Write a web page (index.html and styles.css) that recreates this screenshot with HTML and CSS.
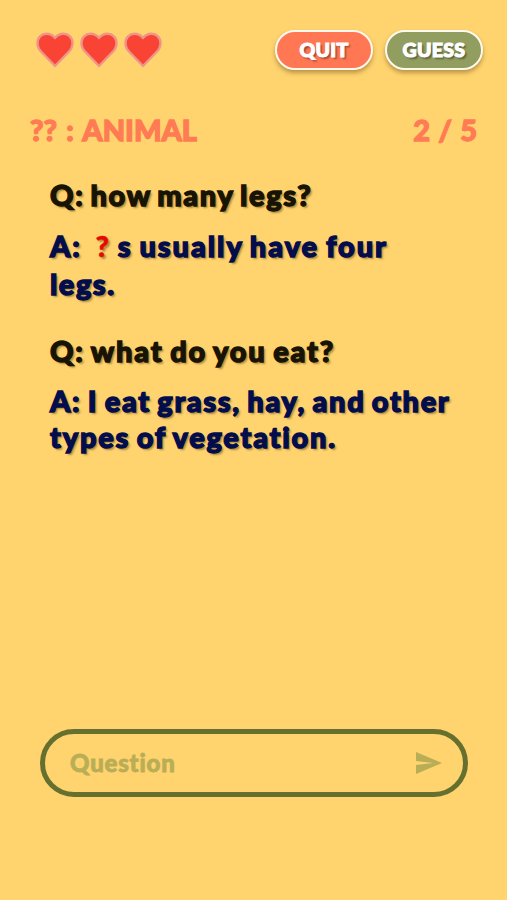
FILE: index.html
```html
<!DOCTYPE html>
<html lang="en">
<head>
<meta charset="utf-8">
<title>Animal guessing game</title>
<link rel="stylesheet" href="styles.css">
</head>
<body>
<main class="game">
  <header class="topbar">
    <div class="lives">
      <svg class="heart" viewBox="0 0 40 38"><path d="M20 35 L6 20.5 C2.5 17 2.5 14 2.5 12 C2.5 6.5 6.5 2.8 11.5 2.8 C15.5 2.8 18 4.5 20 7 C22 4.5 24.5 2.8 28.5 2.8 C33.5 2.8 37.5 6.5 37.5 12 C37.5 14 37.5 17 34 20.5Z"/></svg>
      <svg class="heart" viewBox="0 0 40 38"><path d="M20 35 L6 20.5 C2.5 17 2.5 14 2.5 12 C2.5 6.5 6.5 2.8 11.5 2.8 C15.5 2.8 18 4.5 20 7 C22 4.5 24.5 2.8 28.5 2.8 C33.5 2.8 37.5 6.5 37.5 12 C37.5 14 37.5 17 34 20.5Z"/></svg>
      <svg class="heart" viewBox="0 0 40 38"><path d="M20 35 L6 20.5 C2.5 17 2.5 14 2.5 12 C2.5 6.5 6.5 2.8 11.5 2.8 C15.5 2.8 18 4.5 20 7 C22 4.5 24.5 2.8 28.5 2.8 C33.5 2.8 37.5 6.5 37.5 12 C37.5 14 37.5 17 34 20.5Z"/></svg>
    </div>
    <div class="actions">
      <button class="btn btn-quit">QUIT</button>
      <button class="btn btn-guess">GUESS</button>
    </div>
  </header>
  <div class="status"><span class="category">?? : ANIMAL</span><span class="round">2 / 5</span></div>
  <section class="chat">
    <div class="entry">
      <p class="question"><span class="q-one">Q: how many legs?</span></p>
      <p class="answer tall"><span class="a-one">A: &nbsp;<span class="mark">?</span> s usually have four</span><br><span class="a-two">legs.</span></p>
    </div>
    <div class="entry">
      <p class="question"><span class="q-two">Q: what do you eat?</span></p>
      <p class="answer"><span class="a-three">A: I eat grass, hay, and other</span><br><span class="a-four">types of vegetation.</span></p>
    </div>
  </section>
  <form class="ask">
    <span class="placeholder">Question</span>
    <svg class="send" viewBox="0 0 26 22"><path d="M0 0 26 11 0 22V13L17 11 0 9Z"/></svg>
  </form>
</main>
</body>
</html>
```
FILE: styles.css
```css
* { box-sizing: border-box; }
body { margin: 0; background: #ffd36e; font-family: Lato, sans-serif; font-weight: 900; }
.game { width: 507px; height: 900px; overflow: hidden; display: flex; flex-direction: column; }
.topbar { display: flex; justify-content: space-between; padding: 30px 24px 0 35px; height: 109px; }
.lives { display: flex; gap: 4px; padding-top: 1px; }
.heart { width: 40px; height: 38px; }
.heart path { fill: #f94435; stroke: #f09488; stroke-width: 2.4; stroke-linejoin: round; }
.actions { display: flex; gap: 12px; }
.btn { width: 98px; height: 40px; padding: 0; border: 2px solid #fffaf0; border-radius: 20px; color: #fff; font: 900 19.5px/36px Lato, sans-serif; letter-spacing: .3px; -webkit-text-stroke: 1.1px #fff; text-shadow: 2px 2px 2px rgba(0,0,0,.4); box-shadow: 0 3px 4px rgba(80,50,0,.38); }
.btn-quit { background: #ff7753; }
.btn-guess { background: #929d60; }
.status { display: flex; justify-content: space-between; height: 42px; padding: 0 30px; font-size: 29px; line-height: 42px; color: #ff7b54; -webkit-text-stroke: 1.3px #ff7b54; }
.category { word-spacing: 2.5px; }
.round { word-spacing: 1.3px; }
.chat { height: 578px; padding: 25px 40px 0 50px; font-size: 29px; white-space: nowrap; text-shadow: 2px 2px 2px rgba(70,45,0,.45); }
.entry { height: 156px; }
.question, .answer { margin: 0; -webkit-text-stroke: 1.4px currentColor; }
.question { color: #171405; line-height: 38px; height: 51px; }
.answer { color: #020d4c; line-height: 36px; }
.tall { line-height: 38px; }
.q-one { letter-spacing: 1.65px; word-spacing: -2.5px; }
.q-two { letter-spacing: 1.8px; word-spacing: -2px; }
.a-one { letter-spacing: 1.95px; word-spacing: -2px; }
.a-two { letter-spacing: 1.5px; }
.a-three { letter-spacing: 1.65px; word-spacing: -2px; }
.a-four { letter-spacing: 1.75px; word-spacing: -2px; }
.mark { color: #e30b00; -webkit-text-stroke: .5px #e30b00; }
.ask { width: 428px; height: 68px; flex: none; margin: 0 0 0 40px; padding: 0 21px 0 25px; border: 5px solid #65702f; border-radius: 34px; display: flex; align-items: center; justify-content: space-between; }
.placeholder { color: #b9ae56; font-size: 24px; line-height: 32px; letter-spacing: .8px; -webkit-text-stroke: .8px #b9ae56; }
.send { width: 26px; height: 22px; fill: #b9ae56; }
```
